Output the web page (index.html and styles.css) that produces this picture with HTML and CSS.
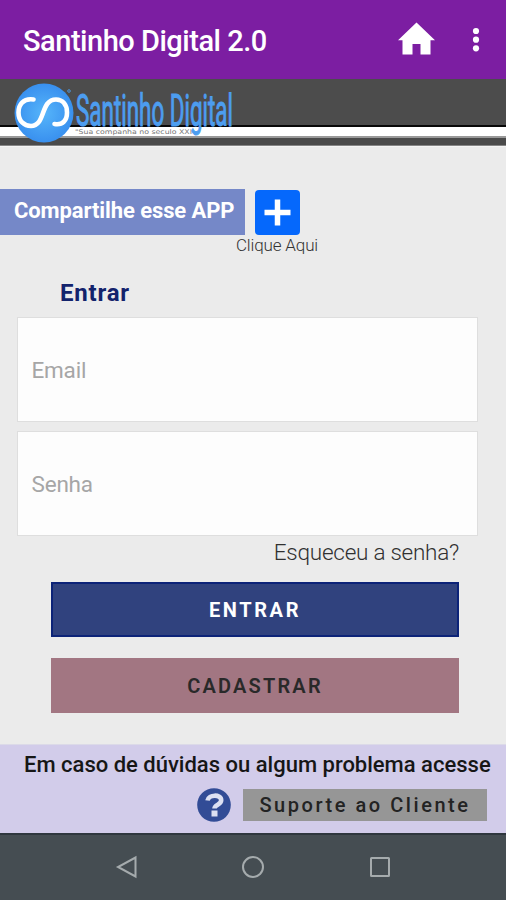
FILE: index.html
```html
<!DOCTYPE html>
<html lang="pt-BR">
<head>
<meta charset="utf-8">
<title>Santinho Digital 2.0</title>
<link rel="stylesheet" href="styles.css">
</head>
<body>
<div class="app">
  <header class="appbar">
    <h1 class="appbar-title">Santinho Digital 2.0</h1>
    <svg class="home" width="38" height="34" viewBox="0 0 38 34"><path d="M19.500 0.500 38 18.200H33.500V32.500H23.500V22H15.500V32.500H5.500V18.200H1Z" fill="#fff"/></svg>
    <svg class="more" width="8" height="26" viewBox="0 0 8 26"><g fill="#fff"><circle cx="4" cy="4" r="3.100"/><circle cx="4" cy="12.700" r="3.100"/><circle cx="4" cy="21.300" r="3.100"/></g></svg>
  </header>
  <div class="brand">
    <svg class="logo" width="240" height="68" viewBox="0 0 240 68">
      <defs><radialGradient id="ball"><stop offset="0" stop-color="#56b5fa"/><stop offset="1" stop-color="#3990ef"/></radialGradient></defs>
      <circle cx="44" cy="34" r="29.500" fill="url(#ball)"/>
      <path d="M33.500 20.500C23 19 18.500 26 18.500 33.500C18.500 42 24 47 31 47C46 47 40 20.500 56 20.500C63 20.500 67 26 67 33.500C67 41 63 46.500 54.500 45" fill="none" stroke="#fff" stroke-width="4.600" stroke-linecap="round"/>
      <circle cx="69" cy="12" r="1.300" fill="none" stroke="#4c93d8"/>
      <g transform="translate(76 46.500) scale(1 1.500)"><text class="logo-name" x="0" y="0" textLength="157" lengthAdjust="spacingAndGlyphs">Santinho Digital</text></g>
      <text class="logo-tag" x="75" y="55" textLength="117" lengthAdjust="spacingAndGlyphs">"Sua companha no seculo XXI</text>
    </svg>
  </div>
  <main class="content">
    <section class="share">
      <div class="share-label"><span class="t">Compartilhe esse APP</span></div>
      <div class="share-action">
        <svg width="45" height="45" viewBox="0 0 45 45"><rect width="45" height="45" rx="4" fill="#0568fc"/><path d="M22.500 9.500V35.500M9.500 22.500H35.500" stroke="#fff" stroke-width="5.500"/></svg>
        <span class="t">Clique Aqui</span>
      </div>
    </section>
    <h2 class="title"><span class="t">Entrar</span></h2>
    <form class="form">
      <div class="field"><span class="t">Email</span></div>
      <div class="field"><span class="t">Senha</span></div>
      <a class="forgot"><span class="t">Esqueceu a senha?</span></a>
      <div class="btn primary"><span class="t">ENTRAR</span></div>
      <div class="btn secondary"><span class="t">CADASTRAR</span></div>
    </form>
  </main>
  <footer class="help">
    <p class="help-text"><span class="t">Em caso de dúvidas ou algum problema acesse</span></p>
    <div class="help-row">
      <svg width="34" height="34" viewBox="0 0 34 34"><circle cx="17" cy="17" r="16.800" fill="#324c96"/><path d="M10.500 12.500C11.500 6.200 24.200 6 24.200 12.300C24.200 17 17.500 16.300 17.500 20.500" fill="none" stroke="#dce0f2" stroke-width="4.600"/><rect x="14.500" y="22.500" width="6" height="6" fill="#dce0f2"/></svg>
      <div class="support"><span class="t">Suporte ao Cliente</span></div>
    </div>
  </footer>
  <nav class="navbar">
    <svg width="24" height="24" viewBox="0 0 24 24"><path d="M20.500 2.500V21.500L3 12Z"/></svg>
    <svg width="24" height="24" viewBox="0 0 24 24"><circle cx="12" cy="12" r="10"/></svg>
    <svg width="24" height="24" viewBox="0 0 24 24"><rect x="3" y="3" width="18" height="18" rx="0.500"/></svg>
  </nav>
</div>
</body>
</html>
```
FILE: styles.css
```css
* { box-sizing: border-box; }
body { margin: 0; font-family: Roboto, sans-serif; background: #ebebeb; }
h1, h2, p { margin: 0; }
svg { display: block; flex: none; }
.t { white-space: nowrap; }
.app { width: 506px; height: 900px; display: flex; flex-direction: column; overflow: hidden; }
.appbar { height: 79px; background: #7c1ea2; display: flex; align-items: center; padding: 2px 26px 0 23px; color: #fff; }
.appbar-title { flex: 1; font-size: 29px; font-weight: 500; letter-spacing: -0.480px; white-space: nowrap; }
.home { margin-right: 37px; margin-top: -4px; }
.more { margin-top: -1px; }
.brand { height: 68px; background: linear-gradient(#4c4c4c 0 46px, #080808 46px 48px, #fff 48px 57px, #999 57px 59px, #4a4a4a 59px 66px, #858585 66px 67px, #f4f4f4 67px 68px); }
.logo { overflow: visible; }
.logo-name { font-family: Roboto, sans-serif; font-size: 29px; font-weight: 400; fill: #4c9df0; stroke: #4c9df0; stroke-width: 0.700px; }
.logo-tag { font-family: "DejaVu Sans", sans-serif; font-size: 6.500px; fill: #777; }
.content { height: 597px; padding-top: 42px; }
.share { display: flex; height: 70px; }
.share-label { width: 245px; height: 45.500px; background: #7588c8; color: #fff; padding: 0 0 3px 14px; display: flex; align-items: center; font-size: 22px; font-weight: 700; letter-spacing: -0.100px; }
.share-action { width: 82px; margin-left: -9px; padding-top: 1px; display: flex; flex-direction: column; align-items: center; font-size: 17px; line-height: 20px; font-weight: 300; letter-spacing: -0.150px; color: #333; }
.title { height: 58px; padding: 20px 0 0 60px; font-size: 24px; line-height: 28px; font-weight: 700; letter-spacing: 0.800px; color: #13236c; }
.form { padding: 0 28px 0 16.500px; display: flex; flex-direction: column; }
.field { height: 105px; margin-bottom: 9px; border: 1.500px solid #dedede; background: #fdfdfd; display: flex; align-items: center; padding-left: 14px; font-size: 22.500px; letter-spacing: -0.200px; color: #a6a6a6; }
.forgot { align-self: flex-end; height: 43px; margin: 0 19px 0 0; font-size: 22.500px; line-height: 26px; font-weight: 300; letter-spacing: -0.250px; color: #303030; }
.field + .forgot { margin-top: -6px; }
.btn { height: 55px; margin: 0 19px 21px 34.500px; display: flex; align-items: center; justify-content: center; font-size: 20px; font-weight: 700; letter-spacing: 2.600px; }
.primary { background: #30427e; border: 2px solid #0c2378; color: #fff; }
.secondary { background: #a27682; color: #292929; font-weight: 600; letter-spacing: 2.200px; }
.help { height: 89px; background: #d2ccea; border-top: 1px solid #dcdae8; padding: 6px 19px 0 24px; }
.help-text { font-size: 22px; line-height: 28px; font-weight: 500; color: #161616; }
.help-row { display: flex; justify-content: flex-end; align-items: center; gap: 12px; margin-top: 9px; }
.support { width: 244px; height: 32px; background: #969696; color: #232323; display: flex; align-items: center; justify-content: center; font-size: 20px; font-weight: 500; letter-spacing: 2.550px; }
.navbar { height: 67px; background: #454d52; border-top: 2px solid #2f373e; display: flex; justify-content: center; gap: 102.500px; align-items: center; padding-bottom: 1px; }
.navbar svg { fill: none; stroke: #a5abad; stroke-width: 2; }
```
